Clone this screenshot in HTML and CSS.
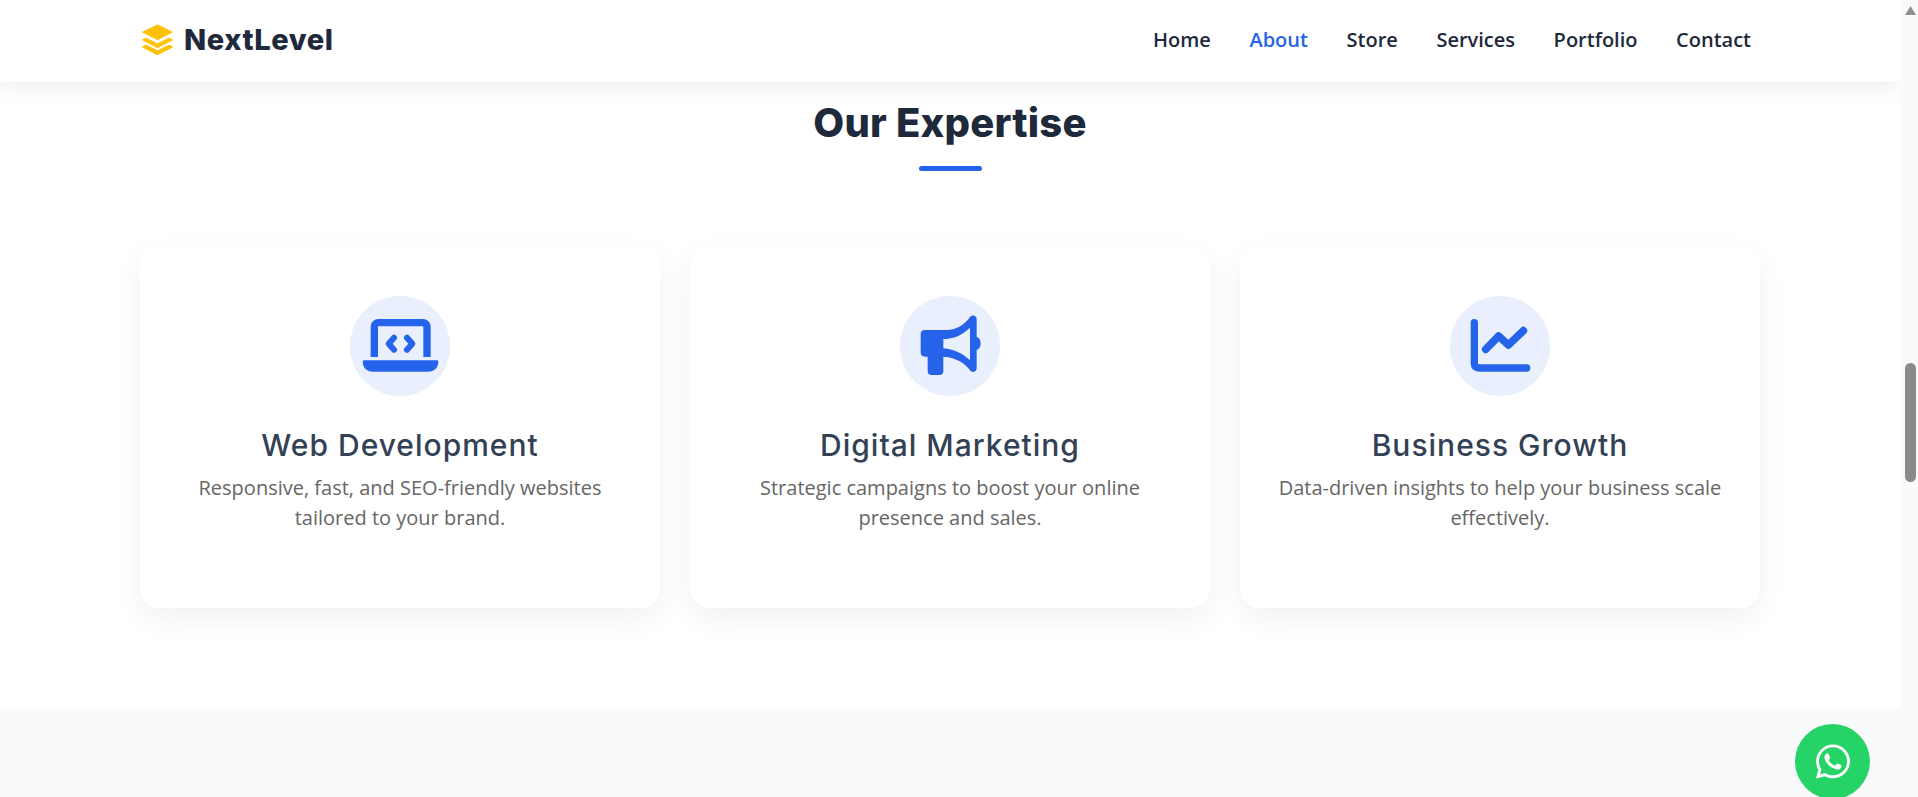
FILE: index.html
```html
<!DOCTYPE html>
<html lang="en">
<head>
<meta charset="utf-8">
<title>NextLevel</title>
<link rel="stylesheet" href="styles.css">
</head>
<body>
<div class="viewport">
  <div class="page">
    <header class="site-header">
      <div class="container header-row">
        <a class="brand" href="#">
          <svg class="brand-icon" viewBox="66 73 92 92"><path d="M112 76 156 97 112 119 68 97Z"/><path d="M67 120 78 115 112 132 146 115 157 120 112 143Z"/><path d="M67 141 78 136 112 153 146 136 157 141 112 164Z"/></svg>
          <span class="brand-name">NextLevel</span>
        </a>
        <nav class="nav">
          <a href="#">Home</a>
          <a href="#" class="active">About</a>
          <a href="#">Store</a>
          <a href="#">Services</a>
          <a href="#">Portfolio</a>
          <a href="#">Contact</a>
        </nav>
      </div>
    </header>

    <section class="expertise">
      <div class="container">
        <h2 class="section-title">Our Expertise</h2>
        <div class="section-rule"></div>
        <div class="cards">
          <article class="card">
            <div class="card-icon">
              <svg viewBox="30 33 300 300">
                <path class="line" d="M103 216V125a12 12 0 0 1 12-12H249a12 12 0 0 1 12 12V216" stroke-width="22" stroke-linecap="butt"/>
                <path class="solid" d="M72 226H291a4 4 0 0 1 4 4c0 17-13 30-30 30H98c-17 0-30-13-30-30a4 4 0 0 1 4-4z"/>
                <path class="line" d="M162 158 146 176 162 194M201 158 217 176 201 194" stroke-width="18"/>
              </svg>
            </div>
            <h3>Web Development</h3>
            <p>Responsive, fast, and SEO-friendly websites tailored to your brand.</p>
          </article>
          <article class="card">
            <div class="card-icon">
              <svg viewBox="30 33 300 300">
                <path class="solid" fill-rule="evenodd" d="M105 135H170C200 135 225 118 240 96 246 88 260 90 260 102V155C268 158 272 165 272 175 272 185 268 192 260 195V250C260 262 246 264 240 256 225 235 200 218 160 215V258Q160 270 148 270H125Q113 270 113 258V215H105Q92 215 92 202V148Q92 135 105 135ZM160 162V190C190 192 218 205 240 226V128C218 150 190 162 160 162Z"/>
              </svg>
            </div>
            <h3>Digital Marketing</h3>
            <p>Strategic campaigns to boost your online presence and sales.</p>
          </article>
          <article class="card">
            <div class="card-icon">
              <svg viewBox="30 33 300 300">
                <path class="line" d="M103 113V235Q103 249 117 249H260" stroke-width="22"/>
                <path class="line" d="M137 193 176 153 205 180 250 137" stroke-width="23"/>
              </svg>
            </div>
            <h3>Business Growth</h3>
            <p>Data-driven insights to help your business scale effectively.</p>
          </article>
        </div>
      </div>
    </section>

    <section class="next-section"></section>
  </div>

  <div class="scrollbar">
    <svg class="scroll-arrow" viewBox="0 0 18 17"><path d="M10.500 6 16 15H5Z"/></svg>
    <div class="scroll-thumb"></div>
  </div>

  <a class="whatsapp" href="#" aria-label="WhatsApp">
    <svg viewBox="0 0 448 512"><path d="M380.9 97.1C339 55.1 283.2 32 223.9 32c-122.4 0-222 99.6-222 222 0 39.1 10.2 77.3 29.6 111L0 480l117.7-30.9c32.4 17.7 68.9 27 106.1 27h.1c122.3 0 224.1-99.6 224.1-222 0-59.3-25.2-115-67.1-157zm-157 341.6c-33.2 0-65.7-8.9-94-25.7l-6.7-4-69.8 18.3L72 359.2l-4.4-7c-18.5-29.4-28.2-63.3-28.2-98.2 0-101.7 82.8-184.5 184.6-184.5 49.3 0 95.6 19.2 130.4 54.1 34.8 34.9 56.2 81.2 56.1 130.5 0 101.8-84.9 184.6-186.6 184.6zm101.2-138.2c-5.5-2.8-32.8-16.2-37.9-18-5.1-1.9-8.8-2.8-12.5 2.8-3.7 5.6-14.3 18-17.6 21.8-3.2 3.7-6.5 4.2-12 1.4-32.6-16.3-54-29.1-75.5-66-5.7-9.8 5.7-9.1 16.3-30.3 1.8-3.7.9-6.9-.5-9.7-1.4-2.8-12.5-30.1-17.1-41.2-4.5-10.8-9.1-9.3-12.5-9.5-3.2-.2-6.9-.2-10.6-.2-3.7 0-9.7 1.4-14.8 6.9-5.1 5.6-19.4 19-19.4 46.3 0 27.3 19.9 53.7 22.6 57.4 2.8 3.7 39.1 59.7 94.8 83.8 35.2 15.2 49 16.5 66.6 13.9 10.7-1.6 32.8-13.4 37.4-26.4 4.6-13 4.6-24.1 3.2-26.4-1.3-2.5-5-3.9-10.5-6.6z"/></svg>
  </a>
</div>
</body>
</html>
```
FILE: styles.css
```css
* { box-sizing: border-box; }
html, body { margin: 0; height: 100%; overflow: hidden; }
body { font-family: "Open Sans", "Noto Sans", sans-serif; color: #1e293b; background: #fff; }
a { text-decoration: none; color: inherit; }

.viewport { display: flex; height: 797px; position: relative; overflow: hidden; }
.page { flex: 1; min-width: 0; overflow: hidden; }
.container { width: 1620px; margin: 0 auto; }

.site-header { height: 82px; background: #fff; box-shadow: 0 4px 20px rgba(0,0,0,.08); position: relative; z-index: 2; }
.header-row { height: 100%; display: flex; align-items: center; justify-content: space-between; padding: 0 9px 3px 2px; }
.brand { display: flex; align-items: center; gap: 11px; }
.brand-icon { width: 31px; height: 31px; fill: #ffc107; }
.brand-icon path { stroke: #ffc107; stroke-width: 3; stroke-linejoin: round; }
.brand-name { font-family: Inter, sans-serif; font-weight: 800; font-size: 29px; color: #1e293b; letter-spacing: .6px; }
.nav { display: flex; gap: 38.6px; font-size: 20px; font-weight: 600; color: #1e293b; }
.nav .active { color: #2563eb; }

.expertise { padding: 11px 0 100px; background: #fff; }
.section-title { margin: 0; text-align: center; font-family: Inter, sans-serif; font-weight: 800; font-size: 40px; line-height: 60px; letter-spacing: .2px; color: #1e293b; position: relative; }
.section-title::before { content: ""; position: absolute; z-index: -1; left: 740px; width: 140px; top: 40px; height: 3px; background: #e2e8f0; }
.section-rule { width: 63px; height: 5px; border-radius: 3px; background: #2563eb; margin: 13px auto 75px; }
.cards { display: grid; grid-template-columns: repeat(3, 1fr); gap: 30px; }
.card { height: 362px; padding: 50px 35px; background: #fff; border-radius: 20px; box-shadow: 0 10px 30px rgba(0,0,0,.06); text-align: center; }
.card-icon { width: 100px; height: 100px; margin: 0 auto 27px; border-radius: 50%; background: #e9effd; }
.card-icon svg { display: block; width: 100px; height: 100px; }
.card-icon .solid { fill: #2563eb; }
.card-icon .line { fill: none; stroke: #2563eb; stroke-linecap: round; stroke-linejoin: round; }
.card-icon .line[stroke-linecap="butt"] { stroke-linecap: butt; }
.card h3 { margin: 0 0 6px; font-family: Inter, sans-serif; font-weight: 500; font-size: 30px; line-height: 44px; letter-spacing: 1px; color: #334155; }
.card p { margin: 0; font-size: 20px; line-height: 30px; color: #666; }

.next-section { height: 89px; background: #f8fafc; }

.scrollbar { width: 18px; background: #fafafa; position: relative; }
.scroll-arrow { display: block; width: 18px; height: 17px; fill: #8f8f8f; }
.scroll-thumb { width: 11px; height: 119px; margin: 346px 0 0 5px; background: #8a8a8a; border-radius: 6px; }

.whatsapp { position: absolute; left: 1795px; top: 724px; width: 75px; height: 75px; border-radius: 50%; background: #25d366; display: flex; align-items: center; justify-content: center; box-shadow: 0 0 20px rgba(255,255,255,.35); }
.whatsapp svg { width: 34px; height: 39px; fill: #fff; }
```
